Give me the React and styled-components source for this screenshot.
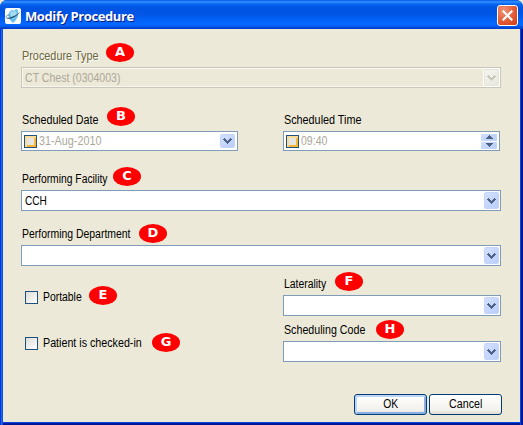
import React from "react";
import styled, { createGlobalStyle, css } from "styled-components";

const GlobalStyle = createGlobalStyle`
  * { box-sizing: border-box; }
  body { margin: 0; background: #ece9d8; overflow: hidden; }
`;

const Window = styled.main`
  width: 523px;
  height: 425px;
  display: grid;
  grid-template-rows: 29px 393px;
  background: linear-gradient(90deg, #0831d9 0, #0831d9 1px, #166aee 1px, #166aee 2px, #0855dd 2px, #0855dd 3px, transparent 3px),
    linear-gradient(90deg, transparent 520px, #0841dc 520px, #0841dc 521px, #001da0 521px, #00138c 523px),
    linear-gradient(#0046e0 0, #0046e0 423px, #001da0 423px, #00138c 425px);
  border-radius: 7px 7px 0 0;
  font-family: "Liberation Sans", Arial, sans-serif;
  font-size: 12px;
  color: #000;
`;

const TitleBar = styled.header`
  display: flex;
  align-items: center;
  padding: 2px 5px 0;
  border-radius: 7px 7px 0 0;
  background: linear-gradient(#0058e6 0, #3a93ff 2px, #1474fa 3px, #0560ea 5px, #0054e3 8px, #0055e5 14px, #0262f8 20px, #0468ff 24px, #0560f4 26px, #0043cf 28px, #003dd7 29px);
`;

const AppIcon = styled.svg`
  display: block;
  width: 16px;
  height: 16px;
  margin-right: 4px;
`;

const Title = styled.h1`
  flex: 1;
  margin: 0;
  font: bold 13px/18px "Open Sans", "Noto Sans", sans-serif;
  letter-spacing: -0.4px;
  color: #fff;
  text-shadow: 1px 1px 0 #0a1883;
  white-space: nowrap;
`;

const CloseButton = styled.button`
  width: 21px;
  height: 21px;
  padding: 0;
  border: 1px solid #fff;
  border-radius: 3px;
  background: radial-gradient(circle at 30% 25%, #f09376 0, #e6603c 50%, #cb3a12 100%);
  svg { display: block; margin: 4px; }
`;

const Body = styled.section`
  width: 517px;
  margin-left: 3px;
  padding: 14px 0 0 18px;
  background: #ece9d8;
  display: grid;
  grid-template-rows: 64px 59px 55px 50px 123px 21px;
`;

const Columns = styled.div`
  display: grid;
  grid-template-columns: 262px 218px;
  align-items: start;
`;

const Stack = styled.div`
  display: grid;
  grid-auto-rows: 46px;
`;

const LabelRow = styled.div`
  height: 24px;
  display: flex;
  align-items: flex-start;
  padding-left: 1px;
  color: ${(p) => (p.$muted ? "#6b6539" : "#000")};
  ${(p) => p.$muted && css`text-shadow: 1px 1px 0 #fff;`}
`;

const Text = styled.span`
  display: block;
  width: ${(p) => (p.$width ? p.$width + "px" : "auto")};
  flex: none;
  line-height: 14px;
  white-space: nowrap;
`;

const LabelText = styled(Text)`
  margin-top: 6px;
`;

const CheckText = styled(Text)`
  margin-top: 4px;
`;

/* Narrows the face horizontally while leaving its height alone. */
const Condensed = styled.span`
  display: inline-block;
  transform: scaleX(${(p) => p.$by || 1});
  transform-origin: ${(p) => p.$origin || "left"} center;
`;

const Badge = styled.span`
  width: 28px;
  height: 19px;
  flex: none;
  margin-top: ${(p) => p.$drop || 0}px;
  border-radius: 50%;
  background: #fe0000;
  color: #fff;
  font: bold 13px/18px "DejaVu Sans", Verdana, sans-serif;
  text-align: center;
  text-shadow: none;
`;

const Box = styled.div`
  width: ${(p) => p.$width}px;
  height: ${(p) => p.$height || 21}px;
  display: flex;
  align-items: center;
  padding: 0 1px 0 2px;
  background: #fff;
  border: 1px solid #7f9db9;
  ${(p) => p.$disabled && css`
    background: #ece9d8;
    border-color: #c9c7ba;
    box-shadow: inset 0 0 0 1px #f7f6f0;
    color: #aca899;
  `}
  ${(p) => p.$picker && css`
    padding: 0 2px;
    color: #aca899;
  `}
`;

const Value = styled(Text)`
  flex: 1;
  margin-left: ${(p) => p.$indent || 0}px;
`;

const DropButton = styled.span`
  width: 15px;
  height: ${(p) => p.$height || 17}px;
  display: grid;
  place-items: center;
  border-radius: 2px;
  color: #4d6185;
  border: 1px solid #c5d4fa;
  background: linear-gradient(135deg, #d3e0fe, #b9cefb);
  ${(p) => p.$disabled && css`
    color: #c9c7ba;
    border-color: #e6e4da;
    background: linear-gradient(135deg, #f5f4ee, #e9e8df);
    box-shadow: 0 0 0 1px #fff;
  `}
  svg { display: block; }
`;

const Spinner = styled.span`
  width: 16px;
  height: 15px;
  display: grid;
  grid-template-rows: 7px 7px;
  gap: 1px;
`;

const SpinButton = styled.span`
  display: grid;
  place-items: center;
  border-radius: 1px;
  background: linear-gradient(135deg, #cfdefe, #b9cefb);
  color: #4d6185;
`;

const DateCheck = styled.span`
  width: 13px;
  height: 13px;
  flex: none;
  border: 1px solid #1c5180;
  background: #e5e5e3;
  box-shadow: inset 1px 1px 0 1px #fddb94, inset -1px -1px 0 1px #f8b636;
`;

const CheckRow = styled.label`
  height: 39px;
  padding: 15px 0 0 4px;
  display: flex;
  align-items: flex-start;
`;

const CheckBox = styled.span`
  width: 13px;
  height: 13px;
  margin: 5px 5px 0 0;
  border: 1px solid #1c5180;
  background: linear-gradient(135deg, #dcdcd7, #fff);
`;

const Actions = styled.footer`
  display: flex;
  gap: 2px;
  padding-left: 333px;
`;

const Button = styled.button`
  width: 73px;
  height: 21px;
  padding: 0 0 1px;
  border: 1px solid #003c74;
  border-radius: 3px;
  background: linear-gradient(#fff, #f2f1ec 80%, #dedbd0);
  box-shadow: ${(p) => (p.$default ? "inset 1px 1px 0 1px #bcd4f6, inset -1px -1px 0 1px #89ade4" : "none")};
  font: 12px/14px "Liberation Sans", Arial, sans-serif;
  color: #000;
`;

const Chevron = () => (
  <svg width="9" height="6" viewBox="0 0 9 6" shapeRendering="crispEdges" fill="currentColor">
    <path d="M1 0h1v1h1v1h1v1h1V2h1V1h1V0h1v1h1v1H8v1H7v1H6v1H5v1H4V5H3V4H2V3H1V2H0V1h1z" />
  </svg>
);

const Triangle = ({ down }) => (
  <svg width="7" height="4" viewBox="0 0 7 4" shapeRendering="crispEdges" fill="currentColor">
    <path d={down ? "M0 0h7v1H6v1H5v1H4v1H3V3H2V2H1V1H0z" : "M3 0h1v1h1v1h1v1h1v1H0V3h1V2h1V1h1z"} />
  </svg>
);

const Label = ({ text, width, scale, badge, drop, muted }) => (
  <LabelRow $muted={muted}>
    <LabelText $width={width}><Condensed $by={scale}>{text}</Condensed></LabelText>
    {badge && <Badge $drop={drop}>{badge}</Badge>}
  </LabelRow>
);

const Combo = ({ width = 480, value, scale, disabled }) => (
  <Box $width={width} $disabled={disabled}>
    <Value $indent={0.5}><Condensed $by={scale}>{value}</Condensed></Value>
    <DropButton $disabled={disabled}><Chevron /></DropButton>
  </Box>
);

const Check = ({ text, width, scale, badge, drop }) => (
  <CheckRow>
    <CheckBox />
    <CheckText $width={width}><Condensed $by={scale}>{text}</Condensed></CheckText>
    <Badge $drop={drop}>{badge}</Badge>
  </CheckRow>
);

export default function App() {
  return (
    <>
      <GlobalStyle />
      <Window>
        <TitleBar>
          <AppIcon viewBox="0 0 16 16">
            <rect width="16" height="16" rx="2" fill="#fafcff" />
            <path d="M5 3l2-1 2 1 2-2 2 1v6l-2 4-3 3-3-3-2-5z" fill="#6cc0ec" />
            <path d="M6 3l3 1 2-1 1 4-4 2-3-2z" fill="#a3dbf5" />
            <path d="M.8 9.2c1 1.6 8.700 0 14.600-5.700C11.500 9.500 2.500 13 .8 9.200z" fill="#23455f" />
            <path d="M.8 9.200C1 7.500 3 7 5 7" fill="none" stroke="#5d7f96" strokeWidth=".8" />
          </AppIcon>
          <Title>Modify Procedure</Title>
          <CloseButton aria-label="Close">
            <svg width="11" height="11" viewBox="0 0 11 11" stroke="#fff" strokeWidth="2.1">
              <path d="M.7.7l9.600 9.600M10.300.7L.7 10.300" />
            </svg>
          </CloseButton>
        </TitleBar>
        <Body>
          <div>
            <Label text="Procedure Type" width={84} scale={0.905} badge="A" muted />
            <Combo value="CT Chest (0304003)" scale={0.88} disabled />
          </div>
          <Columns>
            <div>
              <Label text="Scheduled Date" width={85} scale={0.895} badge="B" />
              <Box $width={217} $height={20} $picker>
                <DateCheck />
                <Value $indent={1.5}><Condensed $by={0.9}>31-Aug-2010</Condensed></Value>
                <DropButton $height={14}><Chevron /></DropButton>
              </Box>
            </div>
            <div>
              <Label text="Scheduled Time" scale={0.9} />
              <Box $width={217} $height={20} $picker>
                <DateCheck />
                <Value $indent={1.5}><Condensed $by={0.88}>09:40</Condensed></Value>
                <Spinner>
                  <SpinButton><Triangle /></SpinButton>
                  <SpinButton><Triangle down /></SpinButton>
                </Spinner>
              </Box>
            </div>
          </Columns>
          <div>
            <Label text="Performing Facility" width={91} scale={0.86} badge="C" drop={1} />
            <Combo value="CCH" scale={0.84} />
          </div>
          <div>
            <Label text="Performing Department" width={117} scale={0.87} badge="D" drop={3} />
            <Combo />
          </div>
          <Columns>
            <Stack>
              <Check text="Portable" width={46} scale={0.865} badge="E" />
              <Check text="Patient is checked-in" width={109} scale={0.892} badge="G" drop={1} />
            </Stack>
            <Stack>
              <div>
                <Label text="Laterality" width={51} scale={0.867} badge="F" drop={1} />
                <Combo width={218} />
              </div>
              <div>
                <Label text="Scheduling Code" width={92} scale={0.89} badge="H" drop={3} />
                <Combo width={218} />
              </div>
            </Stack>
          </Columns>
          <Actions>
            <Button $default><Condensed $by={0.86} $origin="center">OK</Condensed></Button>
            <Button><Condensed $by={0.89} $origin="center">Cancel</Condensed></Button>
          </Actions>
        </Body>
      </Window>
    </>
  );
}
